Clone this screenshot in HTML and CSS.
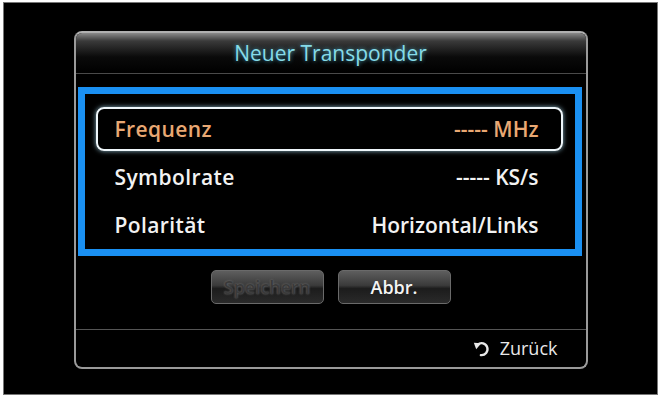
FILE: index.html
```html
<!DOCTYPE html>
<html lang="de">

<head>
    <meta charset="UTF-8">
    <meta name="viewport" content="width=device-width, initial-scale=1.0">
    <title>Neuer Transponder</title>
    <link rel="stylesheet" href="styles.css">
</head>

<body>
    <div class="screen">
        <div class="dialog">
            <div class="dialog-title">Neuer Transponder</div>

            <!-- Eingabefelder -->
            <div class="field-box">
                <div class="field selected">
                    <span class="field-label">Frequenz</span>
                    <span class="field-value">----- MHz</span>
                </div>
                <div class="field">
                    <span class="field-label">Symbolrate</span>
                    <span class="field-value">----- KS/s</span>
                </div>
                <div class="field">
                    <span class="field-label">Polarität</span>
                    <span class="field-value">Horizontal/Links</span>
                </div>
            </div>

            <div class="buttons">
                <button class="btn disabled">Speichern</button>
                <button class="btn">Abbr.</button>
            </div>

            <div class="dialog-footer">
                <svg class="back-icon" width="17" height="17" viewBox="0 0 16 16">
                    <path d="M4.4 4.4 A5.6 5.6 0 1 1 7.4 14.2" fill="none" stroke="#e8e8e8" stroke-width="2.2" stroke-linecap="round"/>
                    <polygon points="0.8,2.6 7.8,3 3,8.6" fill="#e8e8e8"/>
                </svg>
                <span>Zurück</span>
            </div>
        </div>
    </div>
</body>

</html>
```

FILE: styles.css
```css
html, body {
    margin: 0;
    padding: 0;
    background-color: #fff;
}

body {
    font-family: "Open Sans", "DejaVu Sans", sans-serif;
    width: 663px;
    height: 400px;
}

.screen {
    display: flex;
    justify-content: center;
    align-items: center;
    box-sizing: border-box;
    width: 655px;
    height: 393px;
    margin: 2px 0 0 3px;
    background-color: #000;
    border: 1px solid #777;
}

.dialog {
    display: flex;
    flex-direction: column;
    box-sizing: border-box;
    width: 514px;
    height: 338px;
    margin-top: 2px;
    border: 2px solid #9a9a9a;
    border-top-color: #b0b0b0;
    border-radius: 8px;
    background-color: #000;
    overflow: hidden;
}

.dialog-title {
    height: 40px;
    line-height: 40px;
    text-align: center;
    font-size: 21px;
    color: #86dbe8;
    text-shadow: 0 0 4px rgba(80, 190, 220, 0.8);
    background: linear-gradient(#8a8a8a 0px, #3a3a3a 8px, #0a0a0a 24px, #000 100%);
    border-bottom: 1px solid #4a4a4a;
}

/* blauer Rahmen */
.field-box {
    display: flex;
    flex-direction: column;
    gap: 4px;
    margin: 13px 4px 0 2px;
    padding: 13px 12px 2px 11px;
    border: 7px solid #1a90f2;
}

.field {
    display: flex;
    justify-content: space-between;
    align-items: center;
    box-sizing: border-box;
    height: 44px;
    padding: 0 24px 0 19px;
    font-size: 21px;
    font-weight: 600;
    color: #f2f2f2;
}

.field-label {
    letter-spacing: 0.4px;
}

.field.selected {
    padding: 0 22px 0 17px;
    border: 2px solid #eef6fa;
    border-radius: 8px;
    box-shadow: 0 0 5px rgba(170, 220, 240, 0.8);
    color: #e9a873;
}

.buttons {
    display: flex;
    justify-content: center;
    gap: 14px;
    margin-top: 14px;
}

.btn {
    width: 113px;
    height: 34px;
    padding: 0;
    font-family: "Open Sans", "DejaVu Sans", sans-serif;
    font-size: 18px;
    font-weight: 600;
    color: #f4f4f4;
    background: linear-gradient(#5e5e5e, #3a3a3a 45%, #1c1c1c 55%, #2a2a2a);
    border: 1px solid #6a6a6a;
    border-radius: 5px;
}

.btn.disabled {
    color: #3a3a3a;
    text-shadow: 0 0 2px #777;
}

.dialog-footer {
    display: flex;
    justify-content: flex-end;
    align-items: center;
    gap: 10px;
    height: 37px;
    margin-top: auto;
    padding-right: 28px;
    border-top: 1px solid #555;
    font-size: 18px;
    color: #e8e8e8;
}

.back-icon {
    display: block;
}
```
